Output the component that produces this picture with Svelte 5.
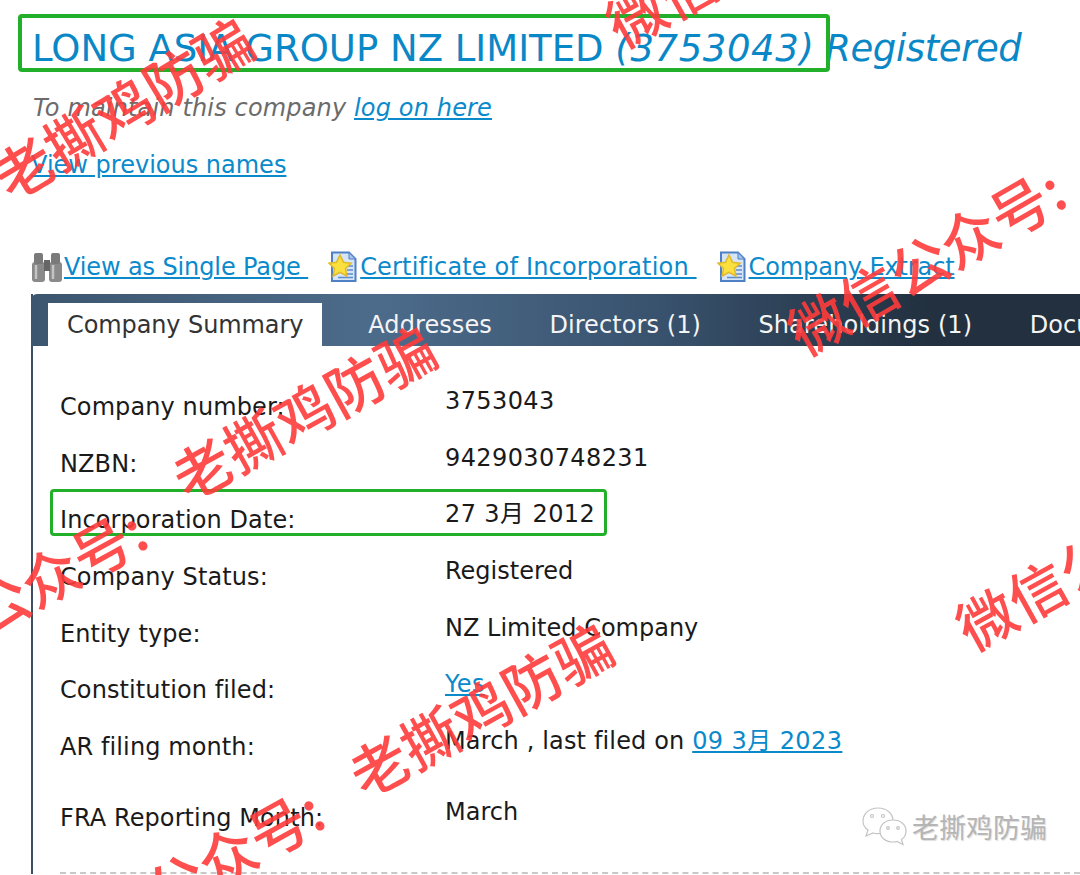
<script>
  const tabs = ['Addresses', 'Directors (1)', 'Shareholdings (1)', 'Documents'];

  const rows = [
    { label: 'Company number:', value: '3753043', kind: 'digits' },
    { label: 'NZBN:', value: '9429030748231', kind: 'digits' },
    { label: 'Incorporation Date:', value: '27 3月 2012', kind: 'digits' },
    { label: 'Company Status:', value: 'Registered' },
    { label: 'Entity type:', value: 'NZ Limited Company' },
    { label: 'Constitution filed:', value: '', link: 'Yes' },
    { label: 'AR filing month:', value: 'March , last filed on ', link: '09 3月 2023', kind: 'mixed' },
    { label: 'FRA Reporting Month:', value: 'March', kind: 'tall' }
  ];

  // centre of the first character of each watermark
  const marks = [
    { text: '老撕鸡防骗', x: 23, y: 168, angle: -31 },
    { text: '微信公众号:', x: 635, y: 15, angle: -29 },
    { text: '老撕鸡防骗', x: 201, y: 468, angle: -29 },
    { text: '微信公众号:', x: 817, y: 323, angle: -30 },
    { text: '公众号:', x: -2, y: 603, angle: -29 },
    { text: '老撕鸡防骗', x: 378, y: 765, angle: -29 },
    { text: '公众号:', x: 175, y: 883, angle: -29 },
    { text: '微信公众号:', x: 985, y: 618, angle: -29 }
  ];
</script>

{#snippet certIcon()}
  <svg class="icon" width="30" height="32" viewBox="0 0 30 32">
    <path d="M4 1.5h17l6.500 6.500v22H4z" fill="#d5e4f7" stroke="#4f80c4" stroke-width="2" />
    <path d="M21 1.500v6.500h6.500z" fill="#a9c6ea" stroke="#4f80c4" />
    <path d="M19 15h6M19 19h6M17 23h8M10 26.500h15" stroke="#5f8ccb" stroke-width="1.500" />
    <path d="M12 4l3.500 7.200 7.500 1-5.500 5.300 1.400 7.500-6.900-3.700L5.100 25l1.400-7.500L1 12.200l7.500-1z" fill="#f9e03e" stroke="#e0b92c" stroke-width="1.500" />
  </svg>
{/snippet}

<div class="page">
  <h1>LONG ASIA GROUP NZ LIMITED <em>(3753043)</em> <em class="status">Registered</em></h1>
  <p class="maintain">To maintain this company <a href="#top">log on here</a></p>
  <p class="previous"><a href="#top">View previous names</a></p>

  <div class="actions">
    <span class="action">
      <svg class="icon binoculars" width="33" height="32" viewBox="0 0 33 32">
        <rect x="1" y="11" width="13" height="20" rx="3" fill="#8a8a8a" />
        <rect x="18" y="11" width="13" height="20" rx="3" fill="#8a8a8a" />
        <rect x="3" y="2" width="9" height="11" rx="2" fill="#7a7a7a" />
        <rect x="20" y="2" width="9" height="11" rx="2" fill="#7a7a7a" />
        <rect x="13" y="9" width="6" height="11" fill="#666" />
        <path d="M5 14v14M22 14v14" stroke="#c4c4c4" stroke-width="2.500" />
      </svg><a href="#top">View as Single Page&nbsp;</a>
    </span>
    <span class="action wide">
      {@render certIcon()}<a href="#top">Certificate of Incorporation&nbsp;</a>
    </span>
    <span class="action">
      {@render certIcon()}<a href="#top">Company Extract</a>
    </span>
  </div>

  <div class="panel">
    <div class="tabbar">
      <div class="tab active">Company Summary</div>
      {#each tabs as tab}
        <div class="tab">{tab}</div>
      {/each}
    </div>
    <div class="details">
      {#each rows as row}
        <div class="row {row.kind ?? ''}">
          <div class="label">{row.label}</div>
          <div class="value">{row.value}{#if row.link}<a href="#top">{row.link}</a>{/if}</div>
        </div>
      {/each}
      <div class="rule"></div>
    </div>
  </div>

  <div class="box box-title"></div>
  <div class="box box-date"></div>

  {#each marks as mark}
    <span class="mark" style="left: {mark.x - 25}px; top: {mark.y - 16}px; rotate: {mark.angle}deg">{mark.text}</span>
  {/each}

  <div class="wechat">
    <svg width="50" height="40" viewBox="0 0 50 40" fill="#fff" stroke="#c4c4c4" stroke-width="1.200">
      <path d="M17 2C8 2 2 8 2 15c0 4 2 7 5 9l-2 6 7-3c2 .6 3 .7 5 .7 9 0 15-6 15-13S26 2 17 2z" />
      <path d="M32 14c-8 0-13 5-13 11s5 11 13 11c1.500 0 3-.2 4-.5l6 3-1.500-5c3-2 4.500-5 4.500-8.500C45 19 40 14 32 14z" />
      <circle cx="11" cy="10" r="1.500" />
      <circle cx="22" cy="10" r="1.500" />
      <circle cx="27" cy="22" r="1.300" />
      <circle cx="37" cy="22" r="1.300" />
    </svg>
    <span>老撕鸡防骗</span>
  </div>
</div>

<style>
  :global(body) {
    margin: 0;
    background: #fff;
  }

  .page {
    position: relative;
    width: 1080px;
    height: 875px;
    overflow: hidden;
    padding-left: 31px;
    box-sizing: border-box;
    font-family: "DejaVu Sans", "Noto Sans CJK SC", sans-serif;
    font-size: 24px;
    color: #1a1a1a;
  }

  a {
    color: #0a8acb;
    text-decoration: underline;
  }

  h1 {
    margin: 0;
    padding: 25px 0 0 1px;
    height: 49px;
    line-height: 48px;
    font-size: 37px;
    font-weight: 400;
    color: #0a87c6;
    white-space: nowrap;
  }

  h1 em {
    letter-spacing: 0.6px;
  }

  h1 .status {
    margin-left: -1px;
    letter-spacing: -0.4px;
  }

  .maintain {
    margin: 0;
    padding: 18px 0 0 2px;
    line-height: 32px;
    font-style: italic;
    letter-spacing: 0.15px;
    color: #6b6b6b;
  }

  .previous {
    margin: 0;
    padding-top: 25px;
    line-height: 32px;
  }

  .actions {
    display: flex;
    margin-top: 70px;
    margin-bottom: -1px;
    height: 32px;
    align-items: center;
    white-space: nowrap;
    letter-spacing: -0.12px;
  }

  .action {
    display: flex;
    align-items: center;
    margin-right: 20px;
  }

  .action.wide {
    letter-spacing: 0.18px;
  }

  .icon {
    flex: none;
    margin-right: 2px;
    filter: blur(0.6px);
  }

  .icon.binoculars {
    margin-right: 0;
  }

  .panel {
    margin-top: 12px;
    border-left: 2px solid #3d4f63;
  }

  .tabbar {
    display: flex;
    align-items: flex-end;
    height: 52px;
    margin-left: -2px;
    padding-left: 17px;
    border-radius: 6px 0 0 0;
    background: linear-gradient(90deg, #3c566f 0%, #4c6b8a 33%, #3a5470 58%, #22303f 86%, #22303f 100%);
    white-space: nowrap;
    box-sizing: border-box;
  }

  .tab {
    height: 43px;
    margin-right: 57.5px;
    line-height: 44px;
    letter-spacing: 0.08px;
    color: #f4f4f4;
  }

  .tab.active {
    margin-right: 46px;
    padding: 0 19px;
    letter-spacing: -0.1px;
    background: #fff;
    color: #333;
  }

  .details {
    padding: 35px 0 0 27px;
  }

  .row {
    display: grid;
    grid-template-columns: 385px 1fr;
    height: 56.7px;
    line-height: 32px;
  }

  .row.tall {
    margin-top: 14px;
  }

  .label {
    padding-top: 10px;
    letter-spacing: 0.1px;
  }

  .value {
    padding-top: 4px;
    white-space: pre;
  }

  .value a {
    letter-spacing: 0.4px;
  }

  .row.digits .value {
    letter-spacing: 0.4px;
  }

  .row.mixed .value {
    letter-spacing: 0.15px;
  }

  .row.mixed .value a {
    letter-spacing: 0.4px;
  }

  .rule {
    margin-top: 23px;
    border-top: 2px dashed #c8c8c8;
  }

  .box {
    position: absolute;
    box-sizing: border-box;
    border: 4px solid #22b02a;
    border-radius: 4px;
  }

  .box-title {
    left: 18px;
    top: 14px;
    width: 812px;
    height: 58px;
  }

  .box-date {
    left: 50px;
    top: 489px;
    width: 557px;
    height: 47px;
    border-width: 3px;
  }

  .mark {
    position: absolute;
    font-family: "Noto Sans CJK SC", sans-serif;
    font-size: 58px;
    font-weight: 500;
    line-height: 1;
    color: #ff3b3b;
    opacity: 0.9;
    white-space: nowrap;
    transform-origin: 0 50%;
  }

  .wechat {
    position: absolute;
    left: 861px;
    top: 806px;
    display: flex;
    align-items: center;
    gap: 1px;
    font-family: "Noto Sans CJK SC", sans-serif;
    font-size: 27px;
    color: #b5b5b5;
    text-shadow: 1px 1px 1px #ddd;
  }
</style>
